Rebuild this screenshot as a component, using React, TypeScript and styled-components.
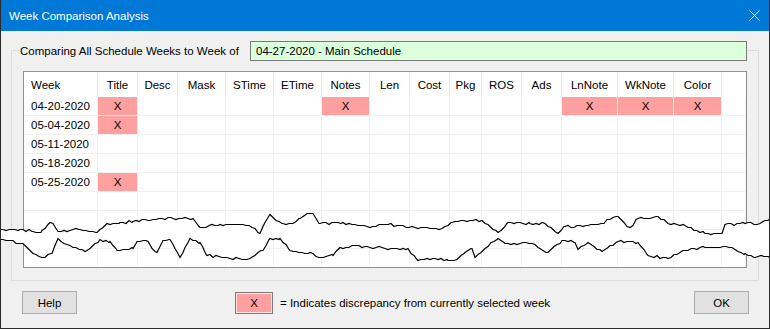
import React from "react";
import styled, { createGlobalStyle } from "styled-components";

const GlobalStyle = createGlobalStyle`
  body {
    margin: 0;
    background: #ffffff;
  }
`;

const Window = styled.div`
  position: relative;
  width: 770px;
  height: 329px;
  box-sizing: border-box;
  border: 1px solid #2b2b2b;
  border-top: none;
  background: #f0f0f0;
  display: flex;
  flex-direction: column;
  font-family: "Liberation Sans", Arial, sans-serif;
  font-size: 11.5px;
  color: #000;
  overflow: hidden;
`;

const TitleBar = styled.div`
  height: 31px;
  flex: none;
  background: #0078d7;
  color: #fff;
  display: flex;
  align-items: center;
  justify-content: space-between;
  padding: 0 9px 0 8px;
`;

const CloseIcon = styled.svg`
  width: 11px;
  height: 11px;
  display: block;
`;

const Body = styled.div`
  flex: 1;
  padding: 19px 10px 0 10px;
  display: flex;
  flex-direction: column;
`;

const GroupBox = styled.div`
  border: 1px solid #dcdcdc;
  padding: 0 11px 12px 11px;
  display: flex;
  flex-direction: column;
`;

const GroupHeader = styled.div`
  display: flex;
  align-items: center;
  width: 728px;
  height: 20px;
  margin: -10px 0 0 -4px;
  padding-left: 1px;
  box-sizing: border-box;
  background: #f0f0f0;
`;

const HeaderLabel = styled.span`
  flex: 1;
  white-space: nowrap;
`;

const WeekField = styled.div`
  width: 497px;
  height: 20px;
  box-sizing: border-box;
  border: 1px solid #7a7a7a;
  background: #dcffdc;
  padding-left: 5px;
  line-height: 18px;
`;

const ListView = styled.div`
  margin-top: 10px;
  height: 197px;
  box-sizing: border-box;
  border: 1px solid #8e8f8f;
  background: #fff;
  overflow: hidden;
`;

const Table = styled.div`
  display: grid;
  grid-template-columns: 74px 40px 40px 48px 48px 48px 48px 40px 40px 32px 40px 40px 56px 56px 48px 1fr;
  grid-template-rows: 25px;
  grid-auto-rows: 19px;
`;

const HeadCell = styled.div<{ $left?: boolean; $last?: boolean }>`
  display: flex;
  align-items: center;
  justify-content: ${(p) => (p.$left ? "flex-start" : "center")};
  padding-left: ${(p) => (p.$left ? "7px" : "0")};
  border-right: ${(p) => (p.$last ? "none" : "1px solid #e5e5e5")};
  white-space: nowrap;
`;

const Cell = styled.div<{ $flag?: boolean; $left?: boolean }>`
  display: flex;
  align-items: center;
  justify-content: ${(p) => (p.$left ? "flex-start" : "center")};
  padding-left: ${(p) => (p.$left ? "7px" : "0")};
  border-right: 1px solid #f0f0f0;
  border-bottom: 1px solid #f0f0f0;
  background: ${(p) => (p.$flag ? "#ffa0a0" : "#fff")};
  white-space: nowrap;
`;

const Footer = styled.div`
  margin-top: 10px;
  display: flex;
  align-items: center;
  padding: 0 10px 0 11px;
`;

const Button = styled.button`
  width: 55px;
  height: 23px;
  box-sizing: border-box;
  border: 1px solid #adadad;
  background: #e1e1e1;
  font: inherit;
  color: #000;
  padding: 0;
`;

const Legend = styled.div`
  display: flex;
  align-items: center;
  margin-left: 158px;
`;

const Swatch = styled.div`
  width: 38px;
  height: 22px;
  box-sizing: border-box;
  border: 1px solid #7a7a7a;
  box-shadow: inset 0 0 0 1px rgba(255, 255, 255, 0.7);
  background: #ffa0a0;
  display: flex;
  align-items: center;
  justify-content: center;
`;

const LegendText = styled.span`
  margin-left: 7px;
  white-space: nowrap;
`;

const OkButton = styled(Button)`
  margin-left: auto;
`;

const Tear = styled.svg`
  position: absolute;
  top: 0;
  left: -1px;
  width: 770px;
  height: 329px;
  pointer-events: none;
`;

const columns = [
  "Week", "Title", "Desc", "Mask", "STime", "ETime", "Notes", "Len",
  "Cost", "Pkg", "ROS", "Ads", "LnNote", "WkNote", "Color",
];

const rows: { week: string; flags: string[] }[] = [
  { week: "04-20-2020", flags: ["Title", "Notes", "LnNote", "WkNote", "Color"] },
  { week: "05-04-2020", flags: ["Title"] },
  { week: "05-11-2020", flags: [] },
  { week: "05-18-2020", flags: [] },
  { week: "05-25-2020", flags: ["Title"] },
  { week: "", flags: [] },
  { week: "", flags: [] },
  { week: "", flags: [] },
  { week: "", flags: [] },
];

// key points of the torn edges, traced from the screenshot
const topEdge = [
  [0, 229], [20, 229], [33, 231], [38, 232], [42, 230], [50, 222], [53, 223], [58, 231],
  [70, 230], [80, 229], [90, 231], [97, 232], [100, 229], [107, 223], [120, 222], [133, 221],
  [150, 220], [173, 218], [193, 218], [200, 227], [220, 224], [240, 224], [255, 228], [260, 233],
  [265, 222], [270, 214], [276, 220], [283, 223], [293, 223], [300, 218], [307, 213], [313, 213],
  [320, 223], [343, 222], [367, 226], [385, 224], [400, 225], [415, 227], [442, 228], [452, 222],
  [470, 220], [482, 220], [490, 226], [498, 232], [508, 222], [530, 223], [545, 223], [552, 228],
  [558, 233], [565, 226], [588, 225], [598, 224], [610, 219], [618, 216], [624, 222], [630, 227],
  [638, 218], [658, 216], [668, 223], [685, 225], [705, 233], [722, 233], [725, 224], [745, 223],
  [760, 223], [765, 220], [770, 218],
];

const bottomEdge = [
  [0, 239], [10, 240], [20, 243], [25, 245], [33, 253], [42, 257], [48, 254], [52, 253],
  [55, 245], [58, 238], [67, 244], [82, 249], [87, 250], [95, 243], [100, 239], [110, 241],
  [117, 250], [133, 248], [137, 241], [148, 241], [152, 248], [157, 252], [163, 240], [170, 239],
  [175, 248], [180, 257], [185, 247], [190, 238], [200, 242], [207, 255], [227, 257], [247, 259],
  [255, 255], [263, 250], [270, 238], [280, 238], [290, 250], [310, 252], [320, 257], [333, 255],
  [340, 247], [353, 245], [367, 246], [385, 248], [408, 248], [418, 260], [435, 258], [448, 260],
  [458, 258], [465, 252], [472, 248], [475, 257], [485, 248], [498, 238], [505, 243], [532, 243],
  [540, 248], [548, 252], [562, 240], [575, 242], [578, 249], [588, 242], [602, 251], [610, 245],
  [618, 241], [638, 242], [648, 255], [668, 258], [685, 250], [705, 247], [732, 247], [745, 253],
  [755, 257], [765, 256], [770, 257],
];

const jitter = (x: number, seed: number) => {
  const v = Math.sin(x * 12.9898 + seed * 78.233) * 43758.5453;
  return Math.round((v - Math.floor(v)) * 2 - 1);
};

const roughen = (pts: number[][], seed: number) => {
  const out: [number, number][] = [];
  for (let i = 0; i < pts.length - 1; i++) {
    const [x0, y0] = pts[i];
    const [x1, y1] = pts[i + 1];
    for (let x = x0; x < x1; x += 3) {
      const t = (x - x0) / (x1 - x0);
      const y = y0 + (y1 - y0) * t + (x === x0 ? 0 : jitter(x, seed));
      out.push([x, Math.round(y) + 0.5]);
    }
  }
  const last = pts[pts.length - 1];
  out.push([last[0], last[1] + 0.5]);
  return out;
};

const toPath = (pts: [number, number][]) =>
  pts.map(([x, y], i) => `${i ? "L" : "M"}${x} ${y}`).join(" ");

const TornEdge: React.FC = () => {
  const top = roughen(topEdge, 1);
  const bottom = roughen(bottomEdge, 2);
  const fill =
    toPath(top) +
    " " +
    [...bottom].reverse().map(([x, y]) => `L${x} ${y}`).join(" ") +
    " Z";
  return (
    <Tear viewBox="0 0 770 329">
      <path d={fill} fill="#fff" />
      <path d={toPath(top)} fill="none" stroke="#000" strokeWidth={1.2} />
      <path d={toPath(bottom)} fill="none" stroke="#000" strokeWidth={1.2} />
    </Tear>
  );
};

const App: React.FC = () => {
  return (
    <>
      <GlobalStyle />
      <Window>
        <TitleBar>
          <span>Week Comparison Analysis</span>
          <CloseIcon viewBox="0 0 11 11">
            <path d="M0.5 0.5 L10.5 10.5 M10.5 0.5 L0.5 10.5" stroke="#fff" strokeWidth={1} />
          </CloseIcon>
        </TitleBar>
        <Body>
          <GroupBox>
            <GroupHeader>
              <HeaderLabel>Comparing All Schedule Weeks to Week of</HeaderLabel>
              <WeekField>04-27-2020 - Main Schedule</WeekField>
            </GroupHeader>
            <ListView>
              <Table>
                {columns.map((c, i) => (
                  <HeadCell key={c} $left={i === 0}>
                    {c}
                  </HeadCell>
                ))}
                <HeadCell $last />
                {rows.map((r, ri) => (
                  <React.Fragment key={ri}>
                    <Cell $left>{r.week}</Cell>
                    {columns.slice(1).map((c) => (
                      <Cell key={c} $flag={r.flags.includes(c)}>
                        {r.flags.includes(c) ? "X" : ""}
                      </Cell>
                    ))}
                    <Cell />
                  </React.Fragment>
                ))}
              </Table>
            </ListView>
          </GroupBox>
          <Footer>
            <Button>Help</Button>
            <Legend>
              <Swatch>X</Swatch>
              <LegendText>= Indicates discrepancy from currently selected week</LegendText>
            </Legend>
            <OkButton>OK</OkButton>
          </Footer>
        </Body>
        <TornEdge />
      </Window>
    </>
  );
};

export default App;
